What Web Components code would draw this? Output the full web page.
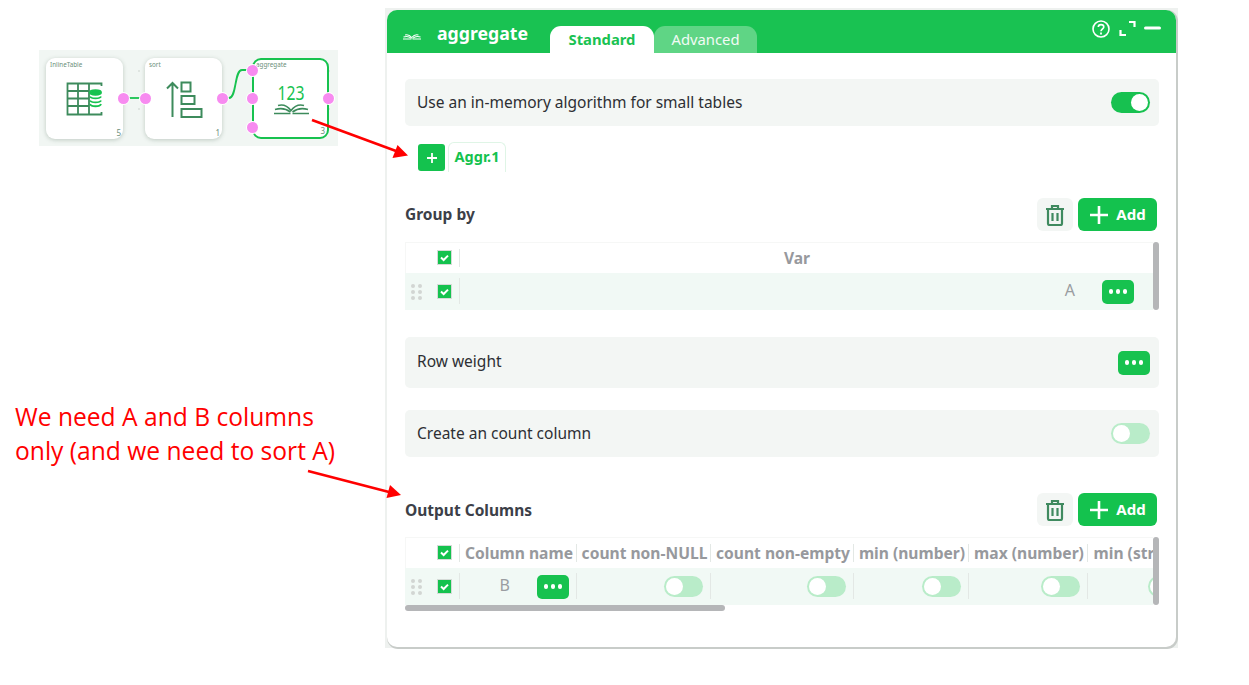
<!DOCTYPE html>
<html>
<head>
<meta charset="utf-8">
<title>aggregate</title>
<style>
    html, body { margin: 0; padding: 0; background: #fff; }
    body { font-family: "Noto Sans", "Open Sans", sans-serif; }
</style>
</head>
<body>
<doc-page></doc-page>
<script>
const BOOK_PATHS = `
    <path d="M3 34.5H19.5M21.5 34.5H38" />
    <path d="M4 30.5C9 29 15 29.5 19.5 33M37 30.5C32 29 26 29.5 21.5 33" />
    <path d="M7 26.5C12 25 16.5 27 20 31.5C23.5 27 28 25 33 26.5" />`;

class ToggleSwitch extends HTMLElement {
    constructor() {
        super();
        this.attachShadow({ mode: 'open' });
    }
    connectedCallback() {
        this.shadowRoot.innerHTML = `
            <style>
                :host { display: inline-block; width: 39px; height: 21px; }
                .track {
                    box-sizing: border-box; width: 100%; height: 100%; border-radius: 11px;
                    background: #b9ecc9; padding: 2px; display: flex;
                }
                :host([on]) .track { background: #17c150; justify-content: flex-end; }
                .knob { width: 17px; height: 17px; border-radius: 50%; background: #fff; }
            </style>
            <div class="track"><div class="knob"></div></div>`;
    }
}
customElements.define('toggle-switch', ToggleSwitch);

class MoreButton extends HTMLElement {
    constructor() {
        super();
        this.attachShadow({ mode: 'open' });
    }
    connectedCallback() {
        this.shadowRoot.innerHTML = `
            <style>
                :host {
                    display: inline-flex; width: 32px; height: 24px; border-radius: 5px;
                    background: #17c24f; align-items: center; justify-content: center; gap: 2.5px;
                }
                i { width: 4.5px; height: 4.5px; border-radius: 50%; background: #fff; }
            </style>
            <i></i><i></i><i></i>`;
    }
}
customElements.define('more-button', MoreButton);

class CheckBox extends HTMLElement {
    constructor() {
        super();
        this.attachShadow({ mode: 'open' });
    }
    connectedCallback() {
        this.shadowRoot.innerHTML = `
            <style>
                :host { display: inline-block; width: 15px; height: 15px; line-height: 0; }
                svg { display: block; }
            </style>
            <svg width="15" height="15" viewBox="0 0 15 15">
                <rect x="0.5" y="0.5" width="14" height="14" fill="#14c24e" stroke="#d5dbd7" />
                <path d="M4 7.6L6.6 10L11 5.6" fill="none" stroke="#fff" stroke-width="2" />
            </svg>`;
    }
}
customElements.define('check-box', CheckBox);

class OptionRow extends HTMLElement {
    constructor() {
        super();
        this.attachShadow({ mode: 'open' });
    }
    connectedCallback() {
        this.shadowRoot.innerHTML = `
            <style>
                :host {
                    display: flex; align-items: center; justify-content: space-between;
                    box-sizing: border-box; height: var(--row-h, 47px);
                    padding: 0 9px 0 12px; border-radius: 5px;
                    background: #f3f6f4; color: #2d2f33; font-size: 15.5px;
                }
                .text { margin-bottom: var(--text-up, 2px); }
            </style>
            <div class="text"><slot></slot></div><slot name="end"></slot>`;
    }
}
customElements.define('option-row', OptionRow);

class SectionHead extends HTMLElement {
    constructor() {
        super();
        this.attachShadow({ mode: 'open' });
    }
    connectedCallback() {
        this.shadowRoot.innerHTML = `
            <style>
                :host {
                    display: flex; align-items: center; height: 33px; padding-right: 2px;
                    color: #3c4048; font-size: 15.5px; font-weight: 700;
                }
                .title { flex: 1; margin-bottom: var(--title-up, 1px); }
                .trash {
                    width: 36px; height: 33px; border-radius: 6px; background: #f3f6f4;
                    display: flex; align-items: center; justify-content: center; margin-right: 5px;
                }
                .add {
                    width: 79px; height: 33px; border-radius: 6px; background: #14c24e; color: #fff;
                    display: flex; align-items: center; justify-content: center; gap: 7px;
                }
                .add span { margin-bottom: 2px; font-size: 15px; }
            </style>
            <div class="title"><slot></slot></div>
            <div class="trash">
                <svg width="20" height="22" viewBox="0 0 20 22" fill="none" stroke="#3f8a5f" stroke-width="2.2">
                    <path d="M1 5H19M7 5V2H13V5" />
                    <path d="M3 5V19.5Q3 21 4.5 21H15.5Q17 21 17 19.5V5" />
                    <path d="M7.5 9V17M12.5 9V17" />
                </svg>
            </div>
            <div class="add">
                <svg width="20" height="20" viewBox="0 0 20 20" stroke="#fff" stroke-width="2.6">
                    <path d="M10 1V19M1 10H19" />
                </svg>
                <span>Add</span>
            </div>`;
    }
}
customElements.define('section-head', SectionHead);

class DataTable extends HTMLElement {
    constructor() {
        super();
        this.attachShadow({ mode: 'open' });
    }
    connectedCallback() {
        const cols = JSON.parse(this.getAttribute('cols'));
        const widths = cols.map(c => c.w + 'px').join(' ');
        const head = cols.map(c => `<div class="cell th" style="padding-right:${c.headPad || 0}px;padding-left:${c.headLeft || 0}px"><span>${c.title}</span></div>`).join('');
        const body = cols.map(c => `<div class="cell td" style="padding-right:${c.pad || 7}px">
            ${c.value ? `<span class="val" style="margin-right:${c.gap}px">${c.value}</span>` : ''}
            ${c.more ? '<more-button></more-button>' : ''}
            ${c.toggle ? '<toggle-switch></toggle-switch>' : ''}
        </div>`).join('');
        const hbar = this.hasAttribute('hbar') ? '<div class="hbar"></div>' : '';
        this.shadowRoot.innerHTML = `
            <style>
                :host { display: block; position: relative; }
                .scroll { width: 748px; overflow: hidden; box-shadow: inset 1px 0 0 #f6f7f6; }
                .grid { display: grid; grid-template-columns: 54px ${widths}; width: max-content; }
                .lead { display: flex; align-items: center; height: 100%; position: relative; }
                .lead check-box { margin-left: 32px; margin-bottom: 1px; }
                .grip {
                    position: absolute; left: 6px; top: 11px;
                    display: grid; grid-template-columns: 4px 4px; gap: 2px 3px;
                }
                .grip i { width: 4px; height: 4px; border-radius: 50%; background: #d2d6d3; }
                .head { height: 31px; border-top: 1px solid #f6f7f6; box-sizing: border-box; }
                .row { height: 37px; background: #f1f9f5; }
                .cell {
                    display: flex; align-items: center; justify-content: flex-end;
                    box-sizing: border-box; white-space: nowrap; height: 100%; position: relative;
                }
                .cell::before {
                    content: ""; position: absolute; left: 0; top: 6px; bottom: 6px;
                    width: 1px; background: #e3e8e5;
                }
                .td::before { top: 5px; bottom: 6px; }
                .th { justify-content: center; color: #97999d; font-size: 15.6px; font-weight: 700; }
                .td { color: #9a9da1; font-size: 16px; }
                .val { margin-bottom: 4px; }
                .bar { position: absolute; right: 0; top: 0; width: 6px; height: 68px; background: #b5b6b8; border-radius: 3px; }
                .hbar { width: 320px; height: 6px; border-radius: 3px; background: #b5b6b8; }
            </style>
            <div class="scroll">
                <div class="grid head">
                    <div class="lead"><check-box></check-box></div>${head}
                </div>
                <div class="grid row">
                    <div class="lead">
                        <div class="grip"><i></i><i></i><i></i><i></i><i></i><i></i></div>
                        <check-box></check-box>
                    </div>${body}
                </div>
            </div>
            ${hbar}
            <div class="bar"></div>`;
    }
}
customElements.define('data-table', DataTable);

class FlowNode extends HTMLElement {
    constructor() {
        super();
        this.attachShadow({ mode: 'open' });
    }
    connectedCallback() {
        const ports = (this.getAttribute('ports') || '').split(' ').filter(Boolean);
        const dots = ports.map(p => {
            const [side, y] = p.split(':');
            return `<i class="port ${side}" style="top:${y}px"></i>`;
        }).join('');
        this.shadowRoot.innerHTML = `
            <style>
                :host {
                    display: flex; align-items: center; justify-content: center;
                    box-sizing: border-box; position: relative;
                    width: 77px; height: 81px; background: #fff; border-radius: 9px;
                    box-shadow: 0 1px 4px rgba(60, 90, 70, 0.28);
                }
                :host([selected]) { border: 2px solid #17c24f; box-shadow: none; }
                .label { position: absolute; left: 4px; top: 2px; font-size: 6.3px; line-height: 9px; color: #6b8f7b; }
                :host([selected]) .label { left: 2px; top: 0; }
                .count { position: absolute; right: 2px; bottom: 1px; font-size: 8px; line-height: 10px; color: #6b8f7b; }
                .port {
                    position: absolute; width: 11px; height: 11px; border-radius: 50%;
                    background: #f78bf0; box-shadow: 0 0 0 1px #fff; margin-top: -5.5px;
                }
                .left { left: -5.5px; }
                .right { right: -5.5px; }
                :host([selected]) .left { left: -7.5px; }
                :host([selected]) .right { right: -6.5px; }
            </style>
            <div class="label">${this.getAttribute('label')}</div>
            <slot></slot>
            <div class="count">${this.getAttribute('count')}</div>
            ${dots}`;
    }
}
customElements.define('flow-node', FlowNode);

class FlowThumb extends HTMLElement {
    constructor() {
        super();
        this.attachShadow({ mode: 'open' });
    }
    connectedCallback() {
        this.shadowRoot.innerHTML = `
            <style>
                :host {
                    display: flex; position: relative; box-sizing: border-box;
                    width: 299px; height: 96px; padding: 8px 9px 7px 7px;
                    background-color: #f1f6f3;
                    background-image: radial-gradient(#dfe5e1 1px, transparent 1.3px);
                    background-size: 38px 38px; background-position: 5px 2px;
                }
                .wires { position: absolute; left: 0; top: 0; }
                flow-node + flow-node { margin-left: 22px; }
                flow-node.third { margin-left: 30px; }
            </style>
            <svg class="wires" width="299" height="96" fill="none" stroke="#17c24f" stroke-width="1.8">
                <path d="M83 48H106" />
                <path d="M183 48H190C198 48 195 20 203 20H213" />
            </svg>
            <flow-node label="InlineTable" count="5" ports="right:40">
                <svg width="40" height="40" viewBox="0 0 40 40" fill="none" stroke="#3d8b5c" stroke-width="1.8">
                    <path d="M36.5 7V4.5H2.5V35.5H36.5V33" />
                    <path d="M2.5 12H24M2.5 19.5H24M2.5 27H24M13 4.5V35.5M24 4.5V35.5" />
                    <g stroke="#17c24f" stroke-width="1.9">
                        <ellipse cx="30.5" cy="13.5" rx="5.5" ry="2.2" fill="#17c24f" />
                        <path d="M25 17.5C26 20 35 20 36 17.5M25 21.5C26 24 35 24 36 21.5M25 25C26 28 35 28 36 25" />
                    </g>
                </svg>
            </flow-node>
            <flow-node label="sort" count="1" ports="left:40 right:40">
                <svg width="40" height="40" viewBox="0 0 40 40" fill="none" stroke="#3d8b5c" stroke-width="2">
                    <path d="M8.5 38V4M3 9.5L8.5 4L14 9.5" />
                    <rect x="17.5" y="3.5" width="9" height="9" />
                    <rect x="17.5" y="17" width="13" height="8" />
                    <rect x="17.5" y="30" width="20" height="8" />
                </svg>
            </flow-node>
            <flow-node class="third" selected label="aggregate" count="3" ports="left:10 left:38 left:67 right:38">
                <svg width="40" height="40" viewBox="0 0 40 40" fill="none" stroke="#3d8b5c" stroke-width="1.6">
                    <text x="20" y="21" text-anchor="middle" textLength="27" lengthAdjust="spacingAndGlyphs" font-family="Noto Sans, sans-serif" font-size="20" fill="#17c24f" stroke="none">123</text>
                    ${BOOK_PATHS}
                </svg>
            </flow-node>`;
    }
}
customElements.define('flow-thumb', FlowThumb);

class NodePanel extends HTMLElement {
    constructor() {
        super();
        this.attachShadow({ mode: 'open' });
    }
    connectedCallback() {
        this.shadowRoot.innerHTML = `
            <style>
                :host {
                    display: block; box-sizing: border-box; width: 793px; height: 640px;
                    padding: 2px 2px 1px 2px; background: #eef1ef;
                    font-family: "Noto Sans", sans-serif;
                }
                .shell {
                    height: 637px; background: #fff; border-radius: 10px; overflow: hidden;
                    box-shadow: 1px 1px 0 1px #c8ccc9;
                }
                header {
                    display: flex; align-items: flex-end; height: 43px; background: #19c252; color: #fff;
                    position: relative;
                }
                .logo { margin: 0 16px 11px 16px; }
                .name { font-size: 17.7px; font-weight: 700; line-height: 24px; margin-bottom: 8px; width: 113px; }
                .tab {
                    width: 104px; height: 27px; border-radius: 11px 11px 0 0; padding-bottom: 1px;
                    display: flex; align-items: center; justify-content: center;
                    font-size: 14.8px; box-sizing: border-box;
                }
                .tab.active { background: #fff; color: #19c252; font-weight: 700; }
                .tab.other { background: #5fd585; color: #f2fbf5; width: 103px; }
                .tools { position: absolute; right: 15px; top: 10px; display: flex; align-items: flex-start; gap: 8px; }
                .body { padding: 26px 17px 0 18px; }
                .tabs { display: flex; align-items: flex-start; margin: 16px 0 26px 13px; height: 30px; }
                .plus {
                    width: 27px; height: 27px; margin-top: 2px; border-radius: 3px; background: #14c24e;
                    display: flex; align-items: center; justify-content: center;
                }
                .sub {
                    box-sizing: border-box; width: 58px; height: 30px; margin-left: 3px; padding-bottom: 3px;
                    border: 1px solid #dff5e6; border-bottom: 0; border-radius: 6px 6px 0 0;
                    color: #14c24e; font-size: 14.5px; font-weight: 700;
                    display: flex; align-items: center; justify-content: center;
                }
                data-table { margin-top: 11px; }
                .weight { --row-h: 51px; --text-up: 4px; margin-top: 27px; }
                .count { margin-top: 22px; }
                .out { --title-up: 0px; margin-top: 36px; }
            </style>
            <div class="shell">
                <header>
                    <svg class="logo" width="18" height="10" viewBox="3 24 35 13" fill="none" stroke="#fff" stroke-width="2">${BOOK_PATHS}</svg>
                    <div class="name">aggregate</div>
                    <div class="tab active">Standard</div>
                    <div class="tab other">Advanced</div>
                    <div class="tools">
                        <svg width="18" height="18" viewBox="0 0 18 18" fill="none" stroke="#fff" stroke-width="1.6">
                            <circle cx="9" cy="9" r="8" />
                            <path d="M6.3 7C6.3 3.8 11.8 3.8 11.8 7C11.8 9 9 9 9 11.2" />
                            <path d="M9 12.6V14.4" stroke-width="1.8" />
                        </svg>
                        <svg width="17" height="17" viewBox="0 0 17 17" fill="none" stroke="#fff" stroke-width="2.2" style="margin-left:1px">
                            <path d="M10 2H15.5V7M1.5 10V15H7" />
                        </svg>
                        <svg width="17" height="18" viewBox="0 0 17 18" stroke="#fff" stroke-width="3" stroke-linecap="round">
                            <path d="M1.5 8H15.5" />
                        </svg>
                    </div>
                </header>
                <div class="body">
                    <option-row>Use an in-memory algorithm for small tables<toggle-switch slot="end" on></toggle-switch></option-row>
                    <div class="tabs">
                        <div class="plus">
                            <svg width="10" height="10" viewBox="0 0 10 10" stroke="#fff" stroke-width="1.8"><path d="M5 0V10M0 5H10" /></svg>
                        </div>
                        <div class="sub">Aggr.1</div>
                    </div>
                    <section-head>Group by</section-head>
                    <data-table cols='[{"title":"Var","w":694,"headPad":18,"value":"A","gap":27,"more":true,"pad":19}]'></data-table>
                    <option-row class="weight">Row weight<more-button slot="end"></more-button></option-row>
                    <option-row class="count">Create an count column<toggle-switch slot="end"></toggle-switch></option-row>
                    <section-head class="out">Output Columns</section-head>
                    <data-table hbar cols='[
                        {"title":"Column name","w":117,"headLeft":3,"value":"B","gap":27,"more":true},
                        {"title":"count non-NULL","w":134,"headLeft":3,"toggle":true},
                        {"title":"count non-empty","w":143,"headLeft":3,"toggle":true},
                        {"title":"min (number)","w":115,"headLeft":3,"toggle":true},
                        {"title":"max (number)","w":119,"headLeft":3,"toggle":true},
                        {"title":"min (string)","w":101,"headLeft":3,"pad":1,"toggle":true}
                    ]'></data-table>
                </div>
            </div>`;
    }
}
customElements.define('node-panel', NodePanel);

class DocPage extends HTMLElement {
    constructor() {
        super();
        this.attachShadow({ mode: 'open' });
    }
    connectedCallback() {
        this.shadowRoot.innerHTML = `
            <style>
                :host { display: flex; position: relative; width: 1249px; height: 685px; overflow: hidden; }
                .side { width: 385px; flex: none; padding-top: 50px; box-sizing: border-box; }
                flow-thumb { margin-left: 39px; }
                .note {
                    margin: 254px 0 0 15px; color: #f00; font-size: 24.6px; line-height: 34px;
                    font-family: "Open Sans", "Noto Sans", sans-serif; white-space: nowrap;
                }
                node-panel { margin-top: 8px; }
                .arrows { position: absolute; left: 0; top: 0; pointer-events: none; }
            </style>
            <div class="side">
                <flow-thumb></flow-thumb>
                <div class="note">We need A and B columns<br>only (and we need to sort A)</div>
            </div>
            <node-panel></node-panel>
            <svg class="arrows" width="1249" height="685">
                <path d="M312 120L396 151" stroke="#f00" stroke-width="2.6" />
                <path d="M408 155.5L392.5 158L397.5 145Z" fill="#f00" />
                <path d="M308 471L389 492" stroke="#f00" stroke-width="2.6" />
                <path d="M401 495L386.5 498L390 485Z" fill="#f00" />
            </svg>`;
    }
}
customElements.define('doc-page', DocPage);
</script>
</body>
</html>
